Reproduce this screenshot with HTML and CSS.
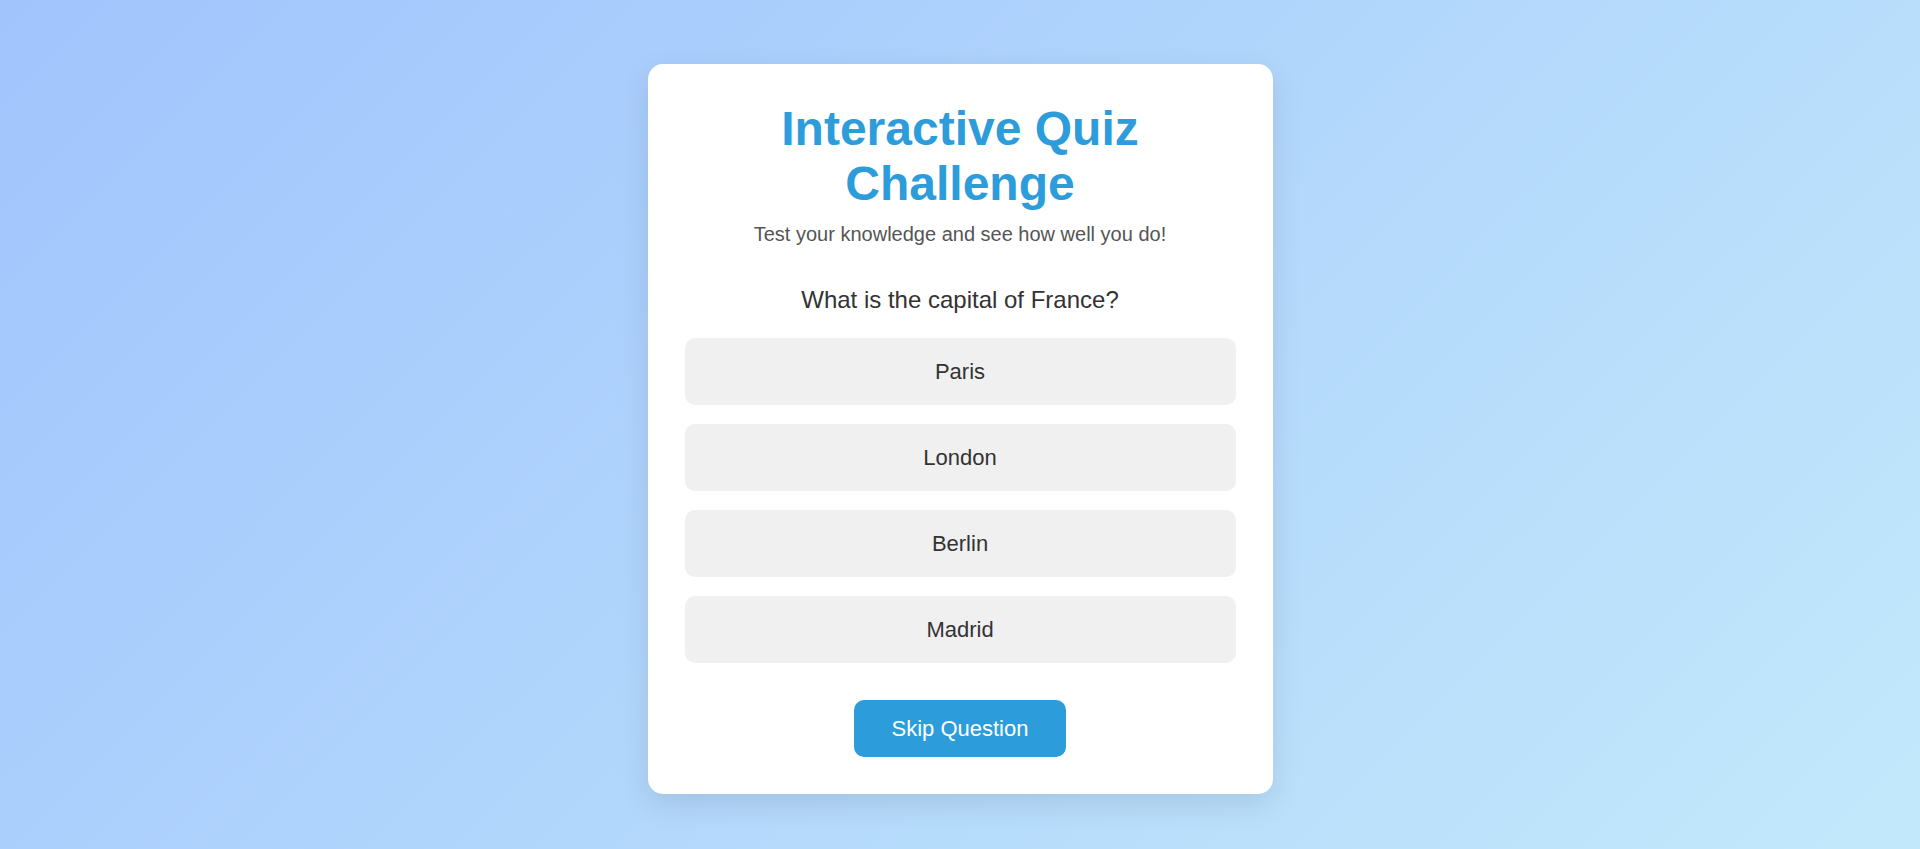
FILE: index.html
```html
<!DOCTYPE html>
<html lang="en">
<head>
<meta charset="utf-8">
<title>Interactive Quiz Challenge</title>
<link rel="stylesheet" href="styles.css">
</head>
<body>
  <main class="card">
    <h1 class="title">Interactive Quiz Challenge</h1>
    <p class="subtitle">Test your knowledge and see how well you do!</p>
    <h2 class="question">What is the capital of France?</h2>
    <div class="answers">
      <button class="answer">Paris</button>
      <button class="answer">London</button>
      <button class="answer">Berlin</button>
      <button class="answer">Madrid</button>
    </div>
    <div class="actions">
      <button class="skip">Skip Question</button>
    </div>
  </main>
</body>
</html>
```

FILE: styles.css
```css
html, body {
  margin: 0;
  height: 100%;
}

body {
  min-height: 100vh;
  box-sizing: border-box;
  padding-top: 64px;
  background: linear-gradient(135deg, #a1c4fd 0%, #c2e9fb 100%);
  font-family: "Liberation Sans", Arial, sans-serif;
  display: flex;
  justify-content: center;
  align-items: flex-start;
  overflow: hidden;
}

.card {
  width: 625px;
  box-sizing: border-box;
  padding: 37px;
  background: #ffffff;
  border-radius: 15px;
  box-shadow: 0 10px 30px rgba(0, 0, 0, 0.1);
  text-align: center;
}

.title {
  margin: 0 0 11.6px;
  font-size: 48px;
  line-height: 55.2px;
  font-weight: bold;
  color: #2d9cdb;
}

.subtitle {
  margin: 0;
  font-size: 20px;
  line-height: 23px;
  color: #555555;
}

.question {
  margin: 39.5px 0 24.7px;
  font-size: 24px;
  line-height: 27.6px;
  font-weight: normal;
  color: #333333;
}

.answers {
  display: flex;
  flex-direction: column;
  gap: 19px;
}

.answer {
  display: block;
  width: 100%;
  padding: 21px;
  border: none;
  border-radius: 10px;
  background: #f0f0f0;
  font-family: inherit;
  font-size: 22px;
  line-height: 25px;
  color: #333333;
  cursor: pointer;
}

.actions {
  margin-top: 37.5px;
  display: flex;
  justify-content: center;
}

.skip {
  padding: 15.8px 38px;
  border: none;
  border-radius: 10px;
  background: #2d9cdb;
  color: #ffffff;
  font-family: inherit;
  font-size: 22px;
  line-height: 25px;
  cursor: pointer;
}
```
